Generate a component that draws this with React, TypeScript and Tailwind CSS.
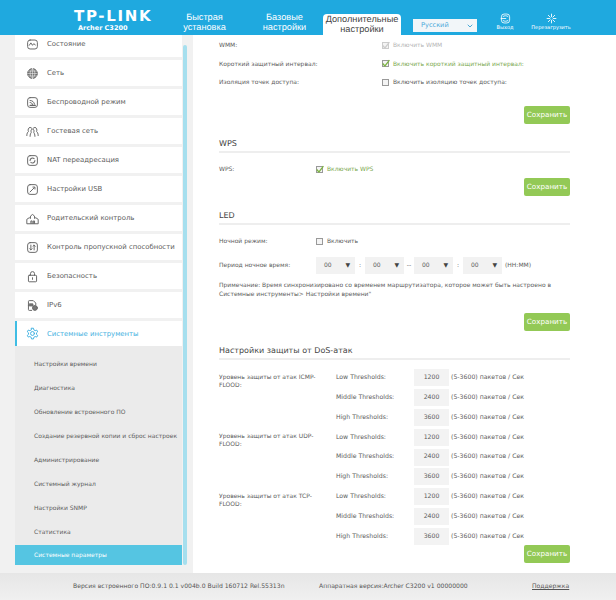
import * as React from 'react'
import { ChevronDown } from 'lucide-react'

const FONT = "font-['DejaVu_Sans',sans-serif] [text-rendering:geometricPrecision]"

const icons: Record<string, React.ReactNode> = {
  status: (
    <>
      <rect x="2" y="2.500" width="12" height="11" rx="3" />
      <path d="M4 9l2-3 2 3 1.500-2 2 1.500" />
    </>
  ),
  network: (
    <>
      <circle cx="8" cy="8" r="6" fill="#777" stroke="#666" />
      <path d="M2 8h12M8 2v12M3 5h10M3 11h10M8 2c-4 3-4 9 0 12M8 2c4 3 4 9 0 12" stroke="#fff" strokeWidth="0.6" />
    </>
  ),
  wireless: (
    <>
      <rect x="2" y="2" width="12" height="12" rx="3" />
      <path d="M5 11.500h6.500" strokeWidth="1.600" />
      <path d="M5 5.500c3 0 5 2 5.500 4.500M5 8c1.500 0 3 1 3 2.500" />
    </>
  ),
  guest: (
    <>
      <path d="M1 13c0-3 1-4 2-5-1-2 0-5 2-5 1 0 1.500 .5 2 1M15 13c0-3-1-4-2-5 1-2 0-5-2-5-1 0-1.500 .5-2 1" />
      <path d="M5 14c0-3 1-4 1.500-5-1-2 0-4 1.500-4s2.500 2 1.500 4c.5 1 1.500 2 1.500 5" />
    </>
  ),
  nat: (
    <>
      <rect x="2" y="2" width="12" height="12" rx="3" />
      <path d="M5 8a3 3 0 0 1 5-2.200M11 8a3 3 0 0 1-5 2.200" strokeWidth="1.300" />
    </>
  ),
  usb: (
    <>
      <rect x="2" y="2" width="12" height="12" rx="3" />
      <path d="M5 11l5-5M8.500 5h2.500v2.500" />
    </>
  ),
  parent: (
    <>
      <path d="M1 14V9l3-2 1.500 1V5l2.500-2 2.500 2v3l1.500-1 3 2v5z" />
      <path d="M6 14v-3h1.500v3M9 14v-3h1.500v3" />
    </>
  ),
  bandwidth: (
    <>
      <rect x="2" y="2" width="12" height="12" rx="3" />
      <path d="M6 5v6l-1.500-1.500M6 11l1.500-1.500M10 11V5L8.500 6.500M10 5l1.500 1.500" />
    </>
  ),
  security: (
    <>
      <rect x="3" y="6.500" width="10" height="8" rx="1" />
      <path d="M5.500 6.500V4.500a2.500 2.500 0 0 1 5 0v2M8 9.500v2" />
    </>
  ),
  ipv6: (
    <>
      <path d="M3 8V3a1 1 0 0 1 1-1h5l3 3v2M3 8v5a1 1 0 0 0 1 1h3" />
      <rect x="4.500" y="6" width="4" height="2.500" fill="#777" />
      <circle cx="11" cy="11" r="3" fill="#777" />
    </>
  ),
  tools: (
    <>
      <path d="M6.800 1.500h2.400l.4 2 1.700 1 1.900-.7 1.200 2.100-1.500 1.300v1.800l1.500 1.300-1.200 2.100-1.900-.7-1.700 1-.4 2H6.800l-.4-2-1.700-1-1.900.7-1.200-2.100 1.500-1.300V7.200L1.600 5.900l1.200-2.100 1.900.7 1.700-1z" />
      <circle cx="8" cy="8" r="2.400" />
    </>
  ),
}

const MENU: [string, string][] = [
  ['status', 'Состояние'],
  ['network', 'Сеть'],
  ['wireless', 'Беспроводной режим'],
  ['guest', 'Гостевая сеть'],
  ['nat', 'NAT переадресация'],
  ['usb', 'Настройки USB'],
  ['parent', 'Родительский контроль'],
  ['bandwidth', 'Контроль пропускной способности'],
  ['security', 'Безопасность'],
  ['ipv6', 'IPv6'],
]

const SUB_MENU = [
  'Настройки времени',
  'Диагностика',
  'Обновление встроенного ПО',
  'Создание резервной копии и сброс настроек',
  'Администрирование',
  'Системный журнал',
  'Настройки SNMP',
  'Статистика',
]

const DOS_GROUPS = ['ICMP', 'UDP', 'TCP']
const THRESHOLDS: [string, string][] = [
  ['Low Thresholds:', '1200'],
  ['Middle Thresholds:', '2400'],
  ['High Thresholds:', '3600'],
]

function MenuIcon({ name, color = '#666' }: { name: string; color?: string }) {
  return (
    <svg viewBox="0 0 16 16" fill="none" stroke={color} strokeWidth="1.200" strokeLinecap="round" strokeLinejoin="round" className="h-[13px] w-[13px] shrink-0">
      {icons[name]}
    </svg>
  )
}

function SaveButton() {
  return (
    <div className="flex justify-end">
      <button className={`h-[18px] w-[46px] rounded-[2px] bg-[#93c956] text-[7.2px] text-white ${FONT}`}>Сохранить</button>
    </div>
  )
}

function Check({ checked, disabled }: { checked?: boolean; disabled?: boolean }) {
  return (
    <span className={`flex h-[7px] w-[7px] shrink-0 items-center justify-center border ${disabled ? 'border-[#ccc]' : 'border-[#999]'} bg-[#f4f4f4]`}>
      {checked && (
        <svg viewBox="0 0 8 8" fill="none" stroke={disabled ? '#ccc' : '#7cb342'} strokeWidth="1.100" className="h-[9px] w-[9px] shrink-0">
          <path d="M1.500 4l2 2.200L7.500 1" />
        </svg>
      )}
    </span>
  )
}

function OptionRow({ label, text, checked, disabled, height, labelWidth }: { label: string; text: string; checked?: boolean; disabled?: boolean; height: string; labelWidth: string }) {
  const color = disabled ? 'text-[#b5b5b5]' : checked ? 'text-[#7ba84f]' : 'text-[#5c5c5c]'
  return (
    <div className={`flex items-center ${height}`}>
      <span className={`shrink-0 whitespace-nowrap pt-px text-[#5c5c5c] ${labelWidth}`}>{label}</span>
      <span className={`flex items-center gap-[4px] whitespace-nowrap ${color}`}>
        <Check checked={checked} disabled={disabled} />
        <span className="pt-px">{text}</span>
      </span>
    </div>
  )
}

function SectionTitle({ children }: { children: React.ReactNode }) {
  return <h2 className="h-[16px] border-b-2 border-[#eeeeee] text-[8px] leading-[14px] text-[#444]">{children}</h2>
}

function TimeSelect() {
  return (
    <span className="flex h-[17px] w-[39px] items-center justify-between bg-[#f2f2f2] pl-[8px] pr-[5px] text-[#5c5c5c]">
      00
      <span className="text-[6px] text-[#444]">▼</span>
    </span>
  )
}

function Sidebar() {
  return (
    <aside className="flex w-[193px] shrink-0 overflow-hidden bg-[#f1f1f1] pl-[15px]">
      <div className="-mt-[4px] flex w-[167px] shrink-0 flex-col gap-[3px]">
        {MENU.map(([icon, label]) => (
          <div key={icon} className="flex h-[26px] items-center gap-[8px] bg-white pl-[11px] text-[6.9px] text-[#5c5c5c]">
            <MenuIcon name={icon} />
            <span className="whitespace-nowrap pt-px">{label}</span>
          </div>
        ))}
        <div>
          <div className="flex h-[25px] items-center gap-[8px] border-l-2 border-[#3fbde4] bg-white pl-[9px] text-[6.9px] text-[#3fb0e0]">
            <MenuIcon name="tools" color="#3fb0e0" />
            <span className="pt-px">Системные инструменты</span>
          </div>
          <div className="flex h-[219px] flex-col bg-[#ebebeb] pl-[19px] pt-[6px] text-[#5c5c5c]">
            {SUB_MENU.map((item) => (
              <div key={item} className="flex h-[24px] shrink-0 items-center whitespace-nowrap">{item}</div>
            ))}
            <div className="-ml-[19px] mt-[1px] flex h-[20px] items-center bg-[#55c5e2] pl-[19px] text-white">Системные параметры</div>
          </div>
        </div>
      </div>
      <div className="ml-[1px] mt-[10px] h-[520px] w-[4px] rounded-full bg-[#a6dfee]" />
    </aside>
  )
}

function Content() {
  return (
    <main className="flex min-w-0 flex-1 flex-col overflow-hidden bg-white pl-[26px] pr-[46px] pt-[1px] text-[#5c5c5c]">
      <OptionRow label="WMM:" text="Включить WMM" checked disabled height="h-[18px]" labelWidth="w-[163px]" />
      <OptionRow label="Короткий защитный интервал:" text="Включить короткий защитный интервал:" checked height="h-[19px]" labelWidth="w-[163px]" />
      <OptionRow label="Изоляция точек доступа:" text="Включить изоляцию точек доступа:" height="h-[18px]" labelWidth="w-[163px]" />
      <div className="mt-[15px]"><SaveButton /></div>

      <div className="mt-[13px]"><SectionTitle>WPS</SectionTitle></div>
      <div className="mt-[7px]"><OptionRow label="WPS:" text="Включить WPS" checked height="h-[18px]" labelWidth="w-[97px]" /></div>
      <SaveButton />

      <div className="mt-[13px]"><SectionTitle>LED</SectionTitle></div>
      <div className="mt-[7px]"><OptionRow label="Ночной режим:" text="Включить" height="h-[18px]" labelWidth="w-[97px]" /></div>
      <div className="mt-[6px] flex h-[18px] items-center">
        <span className="w-[97px] shrink-0">Период ночное время:</span>
        <TimeSelect />
        <span className="w-[10px] text-center">:</span>
        <TimeSelect />
        <span className="w-[10px] text-center">--</span>
        <TimeSelect />
        <span className="w-[10px] text-center">:</span>
        <TimeSelect />
        <span className="ml-[3px]">(HH:MM)</span>
      </div>
      <p className="mt-[7px] leading-[9px]">
        Примечание: Время синхронизировано со временем маршрутизатора, которое может быть настроено в
        <br />
        Системные инструменты&gt; Настройки времени"
      </p>
      <div className="mt-[14px]"><SaveButton /></div>

      <div className="mt-[13px]"><SectionTitle>Настройки защиты от DoS-атак</SectionTitle></div>
      <div className="mt-[8px] flex flex-col">
        {DOS_GROUPS.map((group) => (
          <div key={group} className="flex">
            <p className="w-[117px] shrink-0 pr-[4px] pt-[6px] leading-[8px]">{`Уровень защиты от атак ${group}-FLOOD:`}</p>
            <div className="flex flex-col text-[6.2px]">
              {THRESHOLDS.map(([label, value]) => (
                <div key={label} className="flex h-[19.800px] items-center">
                  <span className="w-[78px] shrink-0 whitespace-nowrap">{label}</span>
                  <span className="flex h-[17px] w-[35px] items-center justify-center bg-[#f3f3f3]">{value}</span>
                  <span className="ml-[2px] whitespace-nowrap">(5-3600) пакетов / Сек</span>
                </div>
              ))}
            </div>
          </div>
        ))}
      </div>
      <div className="-mt-[1px]"><SaveButton /></div>
    </main>
  )
}

export default function App() {
  return (
    <div className={`flex h-[600px] w-[616px] flex-col overflow-hidden bg-white text-[6px] ${FONT}`}>
      <header className="flex h-[35px] shrink-0 bg-[#1fa9df] text-white">
        <div className="ml-[74px] flex w-[102px] shrink-0 flex-col pt-[8px]">
          <span className="text-[15px] font-bold leading-[16px] tracking-[1.700px]">TP-LINK</span>
          <span className="ml-[4px] text-[6.5px] font-bold leading-[8px]">Archer C3200</span>
        </div>
        <nav className="flex items-end font-['Liberation_Sans',sans-serif] text-[9.200px] leading-[9.500px]">
          <div className="w-[57px] pb-[3px] text-center">Быстрая установка</div>
          <div className="ml-[23px] w-[57px] pb-[3px] text-center">Базовые настройки</div>
          <div className="ml-[10px] h-[21px] w-[78px] rounded-t-[4px] bg-white pt-[1px] text-center text-[#444]">Дополнительные настройки</div>
        </nav>
        <div className="ml-[12px] mt-[19px] flex h-[13px] w-[64px] items-center justify-between bg-[#f2f6f9] pl-[8px] pr-[3px] text-[6.6px] text-[#4aa9d9]">
          Русский
          <ChevronDown className="h-[8px] w-[8px]" strokeWidth={3} />
        </div>
        <div className="ml-[13px] flex w-[30px] flex-col items-center pt-[13px] text-[5px]">
          <svg viewBox="0 0 16 16" fill="none" stroke="#fff" strokeWidth="1.200" className="h-[11px] w-[11px]">
            <rect x="2" y="1.500" width="12" height="13" rx="4" />
            <path d="M1 8h8M4 5.500c2-2 6-2 8 0M4 10.500c2 2 6 2 8 0" />
          </svg>
          <span className="mt-[1px]">Выход</span>
        </div>
        <div className="ml-[11px] flex w-[40px] flex-col items-center pt-[13px] text-[5px]">
          <svg viewBox="0 0 16 16" fill="none" stroke="#fff" strokeWidth="1.300" className="h-[11px] w-[11px]">
            <path d="M8 1v5M8 10v5M1 8h5M10 8h5M3 3l3.500 3.500M9.500 9.500L13 13M13 3L9.500 6.500M6.500 9.500L3 13" />
          </svg>
          <span className="mt-[1px] whitespace-nowrap">Перезагрузить</span>
        </div>
      </header>
      <div className="flex min-h-0 flex-1">
        <Sidebar />
        <Content />
      </div>
      <footer className="flex h-[27px] shrink-0 items-center bg-gradient-to-b from-[#e6e6e6] to-[#f0f0f0] pl-[73px] text-[6.1px] text-[#555]">
        <span className="w-[246px] whitespace-nowrap">Версия встроенного ПО:0.9.1 0.1 v004b.0 Build 160712 Rel.55313n</span>
        <span className="w-[213px] whitespace-nowrap">Аппаратная версия:Archer C3200 v1 00000000</span>
        <span className="underline">Поддержка</span>
      </footer>
    </div>
  )
}
